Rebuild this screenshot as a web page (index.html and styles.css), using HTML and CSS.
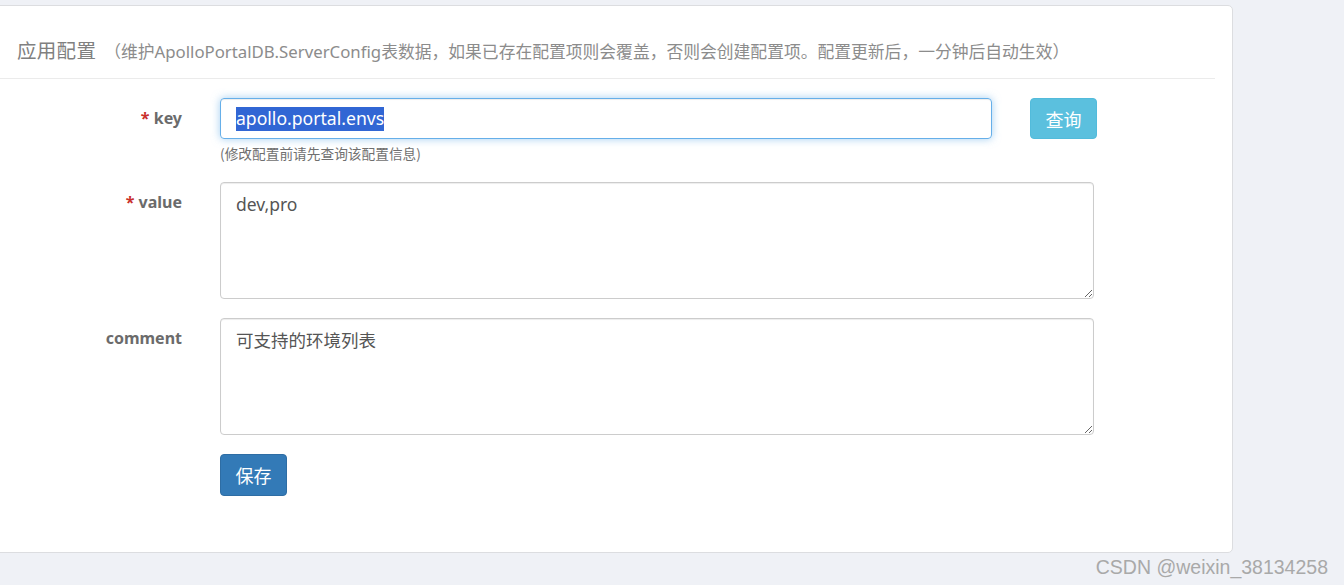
FILE: index.html
```html
<!DOCTYPE html>
<html lang="zh">
<head>
<meta charset="utf-8">
<title>应用配置</title>
<link rel="stylesheet" href="styles.css">
</head>
<body>
<div class="page">
  <div class="card">
    <div class="card-header">
      <span class="title">应用配置</span>
      <span class="subtitle">（维护ApolloPortalDB.ServerConfig表数据，如果已存在配置项则会覆盖，否则会创建配置项。配置更新后，一分钟后自动生效）</span>
    </div>
    <div class="form">
      <div class="row">
        <label class="label"><span class="req">*</span> key</label>
        <div class="field">
          <div class="key-line">
            <div class="input focus"><span class="sel">apollo.portal.envs</span></div>
            <button class="btn btn-info">查询</button>
          </div>
          <div class="help">(修改配置前请先查询该配置信息)</div>
        </div>
      </div>
      <div class="row">
        <label class="label"><span class="req">*</span> value</label>
        <div class="field">
          <textarea class="textarea" readonly>dev,pro</textarea>
        </div>
      </div>
      <div class="row">
        <label class="label">comment</label>
        <div class="field">
          <textarea class="textarea" readonly>可支持的环境列表</textarea>
        </div>
      </div>
      <div class="row">
        <div class="label"></div>
        <div class="field">
          <button class="btn btn-primary">保存</button>
        </div>
      </div>
    </div>
  </div>
  <div class="watermark">CSDN @weixin_38134258</div>
</div>
</body>
</html>
```
FILE: styles.css
```css
* { box-sizing: border-box; }
html, body {
  margin: 0;
  padding: 0;
  background: #eff1f6;
  font-family: "Noto Sans", "Noto Sans CJK SC", sans-serif;
  overflow: hidden;
}
.page {
  width: 1344px;
  height: 585px;
  padding-top: 5px;
  display: flex;
  flex-direction: column;
}
.card {
  margin-left: -21px;
  width: 1254px;
  height: 548px;
  background: #fff;
  border: 1px solid #dcdde0;
  border-radius: 5px;
  padding: 0 17px 0 20px;
}
.card-header {
  height: 73px;
  border-bottom: 1px solid #ebebeb;
  padding: 29px 0 0 17px;
  display: flex;
  align-items: baseline;
  white-space: nowrap;
}
.title {
  font-size: 19.5px;
  color: #808080;
  letter-spacing: 0.3px;
}
.subtitle {
  font-size: 16.8px;
  color: #8c8c8c;
  margin-left: 8px;
}
.form {
  padding-top: 19px;
  display: flex;
  flex-direction: column;
  gap: 19px;
}
.row {
  display: flex;
  align-items: flex-start;
}
.label {
  width: 182px;
  flex: none;
  text-align: right;
  font-size: 16px;
  font-weight: 700;
  color: #6b6b6b;
  padding-top: 9px;
  line-height: 22px;
  margin-right: 38px;
}
.req { color: #c9302c; }
.field { display: flex; flex-direction: column; }
.key-line { display: flex; align-items: flex-start; }
.input {
  width: 772px;
  height: 41px;
  border: 1px solid #66afe9;
  border-radius: 4px;
  padding: 0 15px;
  display: flex;
  align-items: center;
  font-size: 17.6px;
  color: #555;
  box-shadow: inset 0 1px 1px rgba(0,0,0,.075), 0 0 8px rgba(102,175,233,.6);
}
.sel {
  background: #3166d4;
  color: #fff;
  line-height: 23px;
  padding-bottom: 1px;
}
.btn {
  height: 41px;
  width: 67px;
  border-radius: 4px;
  font-family: "Noto Sans CJK SC", sans-serif;
  font-size: 18px;
  color: #fff;
  padding: 0;
  cursor: pointer;
}
.btn-info {
  margin-left: 38px;
  background: #5bc0de;
  border: 1px solid #52bbdb;
}
.btn-primary {
  height: 42px;
  background: #337ab7;
  border: 1px solid #2e6da4;
}
.help {
  margin-top: 6px;
  margin-bottom: 2px;
  font-size: 13.7px;
  color: #6f6f6f;
  line-height: 16px;
  font-family: "Noto Sans CJK SC", sans-serif;
}
.textarea {
  display: block;
  width: 874px;
  height: 117px;
  border: 1px solid #cccccc;
  border-radius: 4px;
  padding: 9px 15px;
  font-family: "Noto Sans", "Noto Sans CJK SC", sans-serif;
  font-size: 17.5px;
  line-height: 24px;
  color: #555;
  resize: vertical;
  outline: none;
  box-shadow: inset 0 1px 1px rgba(0,0,0,.075);
}
.watermark {
  align-self: flex-end;
  margin-right: 16px;
  margin-top: 4px;
  font-family: "Liberation Sans", Arial, sans-serif;
  font-size: 19.5px;
  color: #a9a9a9;
  line-height: 20px;
}
```
